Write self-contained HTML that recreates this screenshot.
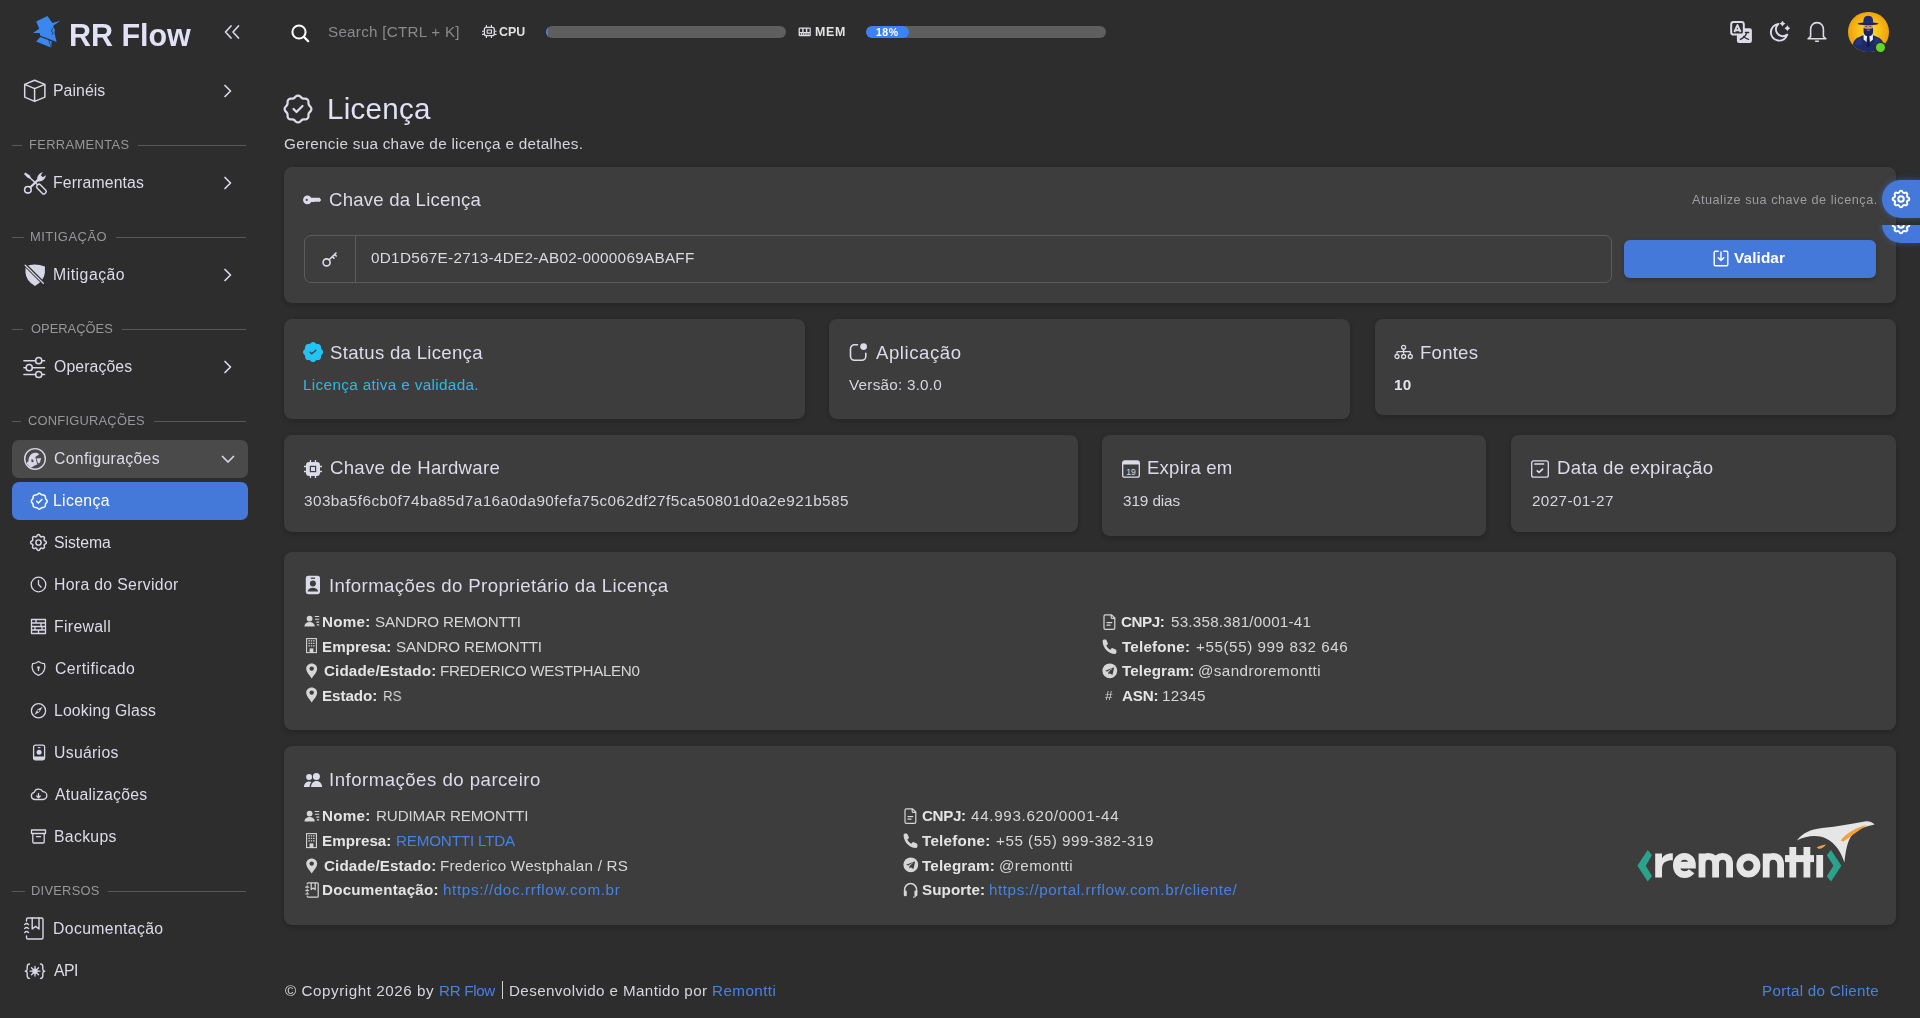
<!DOCTYPE html>
<html lang="pt-BR">
<head>
<meta charset="utf-8">
<title>Licença - RR Flow</title>
<style>
*{box-sizing:border-box;margin:0;padding:0}
html,body{width:1920px;height:1018px;overflow:hidden;background:#2d2d2d;font-family:"Liberation Sans",sans-serif;color:#e1e0f0}
.abs{position:absolute}
svg{display:block;overflow:visible}
.mi{position:absolute;left:12px;width:236px;height:38px;border-radius:7px}
.hl{position:absolute;height:1px;background:#58585a}
.card{position:absolute;background:#3d3d3d;border-radius:8px;box-shadow:0 2px 5px rgba(10,10,20,.22)}
</style>
</head>
<body>
<svg class="abs" style="left:30px;top:14px;" width="32" height="36" viewBox="0 0 32 36"><path fill="#3b87f2" d="M17.44 2.00 L22.39 8.90 L30.40 6.80 L23.42 11.50 L23.30 13.30 L24.90 15.40 L24.50 18.30 L24.90 20.70 L26.60 27.90 L19.10 24.90 L10.40 21.80 L9.60 19.10 L3.00 19.00 L9.20 14.80 L6.20 7.60Z"/><path fill="#3b87f2" d="M10.30 23.00 L18.40 26.00 L20.80 33.60 L6.20 27.40Z"/><path fill="#3b87f2" d="M19.50 26.50 L21.60 27.30 L21.20 33.80Z"/><path d="M22.5 14.399999999999999 L21.5 17.2 L23.200000000000003 19.0 L22.200000000000003 20.799999999999997" fill="none" stroke="#2d2d2d" stroke-width=".8"/></svg>
<div class="abs tx0" style="left:69.00px;top:19.98px;font-size:30.5px;line-height:1;font-weight:700;color:#e3e1f6;letter-spacing:-0.044px;white-space:pre;will-change:transform;">RR Flow</div>
<svg class="abs" style="left:223px;top:24px;" width="18" height="16" viewBox="0 0 18 16"><path fill="none" stroke="#d8d7e6" stroke-width="1.7" stroke-linecap="round" stroke-linejoin="round" d="M8 2 L2.5 8 L8 14 M15.5 2 L10 8 L15.5 14"/></svg>
<svg class="abs" style="left:23px;top:79px;" width="24" height="24" viewBox="0 0 24 24"><path fill="none" stroke="#d8d7e6" stroke-width="1.5" stroke-linecap="round" stroke-linejoin="round" d="M11.6 1.3 L21.9 5.4 L21.9 18.1 L11.6 22.4 L1.7 18.1 L1.7 5.4 Z M1.7 5.4 L11.6 9.6 L21.9 5.4 M11.6 9.6 L11.6 22.4"/></svg>
<div class="abs tx1" style="left:53.34px;top:82.88px;font-size:15.8px;line-height:1;font-weight:400;color:#dcdbe8;letter-spacing:0.075px;white-space:pre;will-change:transform;">Painéis</div>
<svg class="abs" style="left:223px;top:84.0px;" width="10" height="14" viewBox="0 0 10 14"><path fill="none" stroke="#d8d7e6" stroke-width="1.7" stroke-linecap="round" stroke-linejoin="round" d="M2 1.5 L7.5 7 L2 12.5"/></svg>
<div class="hl" style="left:12px;top:145.0px;width:10.0px"></div>
<div class="abs tx2" style="left:29.00px;top:139.08px;font-size:12.9px;line-height:1;font-weight:400;color:#97979b;letter-spacing:0.364px;white-space:pre;will-change:transform;">FERRAMENTAS</div>
<div class="hl" style="left:137.7px;top:145.0px;width:108.3px"></div>
<svg class="abs" style="left:24px;top:172px;" width="22" height="22" viewBox="0 0 22 22"><path fill="#d8d7e6" d="M0 1.9 L1.3 0.4 L5.9 3.5 L6.7 5.5 L5.6 6.5 L3.6 5.8 Z"/><path fill="none" stroke="#d8d7e6" stroke-width="1.4" stroke-linecap="round" stroke-linejoin="round" d="M5.6 5.6 L13.2 12.6"/><rect x="-5.6" y="-2.3" width="11.2" height="4.6" rx="1.8" transform="translate(17.4 17.1) rotate(45)" fill="none" stroke="#d8d7e6" stroke-width="1.5" stroke-linecap="round" stroke-linejoin="round"/><path fill="none" stroke="#d8d7e6" stroke-width="2.2" stroke-linecap="round" stroke-linejoin="round" d="M6.4 15.3 L14.6 7.4"/><circle cx="3.9" cy="17.8" r="3.3" fill="none" stroke="#d8d7e6" stroke-width="1.6" stroke-linecap="round" stroke-linejoin="round"/><path fill="#d8d7e6" d="M13.4 8.6 C12.5 5.2 14.4 1.2 18.8 0.3 L16.8 3.2 L18.8 5.2 L21.9 3.3 C21.5 7.4 17.8 9.8 14.6 9.4 Z"/></svg>
<div class="abs tx3" style="left:53.34px;top:174.88px;font-size:15.8px;line-height:1;font-weight:400;color:#dcdbe8;letter-spacing:0.135px;white-space:pre;will-change:transform;">Ferramentas</div>
<svg class="abs" style="left:223px;top:176.0px;" width="10" height="14" viewBox="0 0 10 14"><path fill="none" stroke="#d8d7e6" stroke-width="1.7" stroke-linecap="round" stroke-linejoin="round" d="M2 1.5 L7.5 7 L2 12.5"/></svg>
<div class="hl" style="left:12px;top:237.0px;width:11.7px"></div>
<div class="abs tx4" style="left:30.49px;top:231.08px;font-size:12.9px;line-height:1;font-weight:400;color:#97979b;letter-spacing:0.525px;white-space:pre;will-change:transform;">MITIGAÇÃO</div>
<div class="hl" style="left:116.0px;top:237.0px;width:130.0px"></div>
<svg class="abs" style="left:24px;top:263px;" width="22" height="24" viewBox="0 0 22 24"><path fill="#d8d7e6" d="M1.5 3.2 Q11 -0.6 20.9 3.6 L20.9 9.5 Q20.2 17.8 11 23 Q1.8 17.8 1.5 9.5 Z"/><path stroke="#2d2d2d" stroke-width="3.4" stroke-linecap="butt" d="M0 0.8 L21.5 22.3"/><path stroke="#d8d7e6" stroke-width="1.3" stroke-linecap="round" d="M1.2 2.3 L19.3 20.3"/></svg>
<div class="abs tx5" style="left:53.34px;top:266.88px;font-size:15.8px;line-height:1;font-weight:400;color:#dcdbe8;letter-spacing:0.506px;white-space:pre;will-change:transform;">Mitigação</div>
<svg class="abs" style="left:223px;top:268.0px;" width="10" height="14" viewBox="0 0 10 14"><path fill="none" stroke="#d8d7e6" stroke-width="1.7" stroke-linecap="round" stroke-linejoin="round" d="M2 1.5 L7.5 7 L2 12.5"/></svg>
<div class="hl" style="left:12px;top:329.0px;width:11.0px"></div>
<div class="abs tx6" style="left:31.00px;top:323.08px;font-size:12.9px;line-height:1;font-weight:400;color:#97979b;letter-spacing:0.011px;white-space:pre;will-change:transform;">OPERAÇÕES</div>
<div class="hl" style="left:121.5px;top:329.0px;width:124.5px"></div>
<svg class="abs" style="left:23px;top:350px;" width="23" height="30" viewBox="0 0 23 30"><path fill="none" stroke="#d8d7e6" stroke-width="1.5" stroke-linecap="round" stroke-linejoin="round" d="M0.9 10.7 H12.6 M18.9 10.7 H21.6 M0.9 17.7 H3.1 M9.4 17.7 H21.6 M0.9 24.5 H12.6 M18.9 24.5 H21.6"/><circle cx="15.7" cy="10.7" r="3.1" fill="none" stroke="#d8d7e6" stroke-width="1.5" stroke-linecap="round" stroke-linejoin="round"/><circle cx="6.2" cy="17.7" r="3.1" fill="none" stroke="#d8d7e6" stroke-width="1.5" stroke-linecap="round" stroke-linejoin="round"/><circle cx="15.7" cy="24.5" r="3.1" fill="none" stroke="#d8d7e6" stroke-width="1.5" stroke-linecap="round" stroke-linejoin="round"/></svg>
<div class="abs tx7" style="left:54.34px;top:358.88px;font-size:15.8px;line-height:1;font-weight:400;color:#dcdbe8;letter-spacing:0.100px;white-space:pre;will-change:transform;">Operações</div>
<svg class="abs" style="left:223px;top:360.0px;" width="10" height="14" viewBox="0 0 10 14"><path fill="none" stroke="#d8d7e6" stroke-width="1.7" stroke-linecap="round" stroke-linejoin="round" d="M2 1.5 L7.5 7 L2 12.5"/></svg>
<div class="hl" style="left:12px;top:421.0px;width:8.6px"></div>
<div class="abs tx8" style="left:28.32px;top:415.08px;font-size:12.9px;line-height:1;font-weight:400;color:#97979b;letter-spacing:0.225px;white-space:pre;will-change:transform;">CONFIGURAÇÕES</div>
<div class="hl" style="left:154.0px;top:421.0px;width:92.0px"></div>
<div class="mi" style="top:440px;background:#4a4a4a"></div>
<svg class="abs" style="left:24px;top:448px;" width="22" height="22" viewBox="0 0 22 22"><circle cx="11" cy="10.9" r="10.3" fill="none" stroke="#d8d7e6" stroke-width="1.4" stroke-linecap="round" stroke-linejoin="round"/><path fill="#d8d7e6" d="M5.4 8.8 C6.2 6.2 8.2 4.9 11.7 4.7 C13.1 4.6 14.3 5.3 15.3 6.3 L11.3 9 L13.3 16.6 L11 17.2 L7.1 19.8 C5 18.6 3.4 16.8 2.4 15 L4.5 13.2 C4.4 11.6 4.8 10 5.4 8.8 Z"/><path fill="#4a4a4a" d="M7.2 11.6 L9.2 11.4 L9.6 14 L7.6 14.2 Z"/><path fill="#d8d7e6" d="M12.4 10.4 L17.1 9.9 L16 14.6 L14.2 15.4 Z"/></svg>
<div class="abs tx9" style="left:54.34px;top:451.38px;font-size:15.8px;line-height:1;font-weight:400;color:#dcdbe8;letter-spacing:0.310px;white-space:pre;will-change:transform;">Configurações</div>
<svg class="abs" style="left:221px;top:454.5px;" width="14" height="10" viewBox="0 0 14 10"><path fill="none" stroke="#d8d7e6" stroke-width="1.7" stroke-linecap="round" stroke-linejoin="round" d="M1.5 1.5 L7 7 L12.5 1.5"/></svg>
<div class="mi" style="top:482px;background:#4479da"></div>
<svg class="abs" style="left:30.5px;top:492.5px" width="16.5" height="16.5" viewBox="2.6 2.6 18.8 18.8"><path fill="none" stroke="#ffffff" stroke-width="1.7" stroke-linecap="round" stroke-linejoin="round" d="M5 7.2a2.2 2.2 0 0 1 2.2 -2.2h1a2.2 2.2 0 0 0 1.55 -.64l.7 -.7a2.2 2.2 0 0 1 3.12 0l.7 .7c.412 .41 .97 .64 1.55 .64h1a2.2 2.2 0 0 1 2.2 2.2v1c0 .58 .23 1.138 .64 1.55l.7 .7a2.2 2.2 0 0 1 0 3.12l-.7 .7a2.2 2.2 0 0 0 -.64 1.55v1a2.2 2.2 0 0 1 -2.2 2.2h-1a2.2 2.2 0 0 0 -1.55 .64l-.7 .7a2.2 2.2 0 0 1 -3.12 0l-.7 -.7a2.2 2.2 0 0 0 -1.55 -.64h-1a2.2 2.2 0 0 1 -2.2 -2.2v-1a2.2 2.2 0 0 0 -.64 -1.55l-.7 -.7a2.2 2.2 0 0 1 0 -3.12l.7 -.7a2.2 2.2 0 0 0 .64 -1.55v-1M9 12l2 2l4 -4"/></svg>
<div class="abs tx10" style="left:53.34px;top:493.03px;font-size:15.8px;line-height:1;font-weight:400;color:#ffffff;letter-spacing:0.333px;white-space:pre;will-change:transform;">Licença</div>
<svg class="abs" style="left:30px;top:534.0px" width="17" height="17" viewBox="2.3 2.3 19.4 19.4"><path fill="none" stroke="#d8d7e6" stroke-width="1.7" stroke-linecap="round" stroke-linejoin="round" d="M10.325 4.317c.426 -1.756 2.924 -1.756 3.35 0a1.724 1.724 0 0 0 2.573 1.066c1.543 -.94 3.31 .826 2.37 2.37a1.724 1.724 0 0 0 1.065 2.572c1.756 .426 1.756 2.924 0 3.35a1.724 1.724 0 0 0 -1.066 2.573c.94 1.543 -.826 3.31 -2.37 2.37a1.724 1.724 0 0 0 -2.572 1.065c-.426 1.756 -2.924 1.756 -3.35 0a1.724 1.724 0 0 0 -2.573 -1.066c-1.543 .94 -3.31 -.826 -2.37 -2.37a1.724 1.724 0 0 0 -1.065 -2.572c-1.756 -.426 -1.756 -2.924 0 -3.35a1.724 1.724 0 0 0 1.066 -2.573c-.94 -1.543 .826 -3.31 2.37 -2.37c1 .608 2.296 .07 2.572 -1.065zM9 12a3 3 0 1 0 6 0a3 3 0 0 0 -6 0"/></svg>
<div class="abs tx11" style="left:53.98px;top:535.03px;font-size:15.8px;line-height:1;font-weight:400;color:#dcdbe8;letter-spacing:-0.043px;white-space:pre;will-change:transform;">Sistema</div>
<svg class="abs" style="left:30px;top:576.0px;" width="17" height="17" viewBox="0 0 17 17"><circle cx="8.5" cy="8.5" r="7.3" fill="none" stroke="#d8d7e6" stroke-width="1.3" stroke-linecap="round" stroke-linejoin="round"/><path fill="none" stroke="#d8d7e6" stroke-width="1.3" stroke-linecap="round" stroke-linejoin="round" d="M8.5 4.5 V8.5 L11 11"/></svg>
<div class="abs tx12" style="left:53.68px;top:577.03px;font-size:15.8px;line-height:1;font-weight:400;color:#dcdbe8;letter-spacing:0.323px;white-space:pre;will-change:transform;">Hora do Servidor</div>
<svg class="abs" style="left:30px;top:618.0px;" width="17" height="17" viewBox="0 0 17 17"><path fill="none" stroke="#d8d7e6" stroke-width="1.3" stroke-linecap="round" stroke-linejoin="round" d="M1.5 1.5 H15.5 V15.5 H1.5 Z M1.5 5 H15.5 M1.5 8.5 H15.5 M1.5 12 H15.5 M6 1.5 V5 M11 5 V8.5 M5 8.5 V12 M12 8.5 V12 M8.5 12 V15.5"/></svg>
<div class="abs tx13" style="left:53.68px;top:619.03px;font-size:15.8px;line-height:1;font-weight:400;color:#dcdbe8;letter-spacing:0.323px;white-space:pre;will-change:transform;">Firewall</div>
<svg class="abs" style="left:30px;top:660.0px;" width="17" height="17" viewBox="0 0 17 17"><path fill="none" stroke="#d8d7e6" stroke-width="1.3" stroke-linecap="round" stroke-linejoin="round" d="M8.5 1.6 A9 9 0 0 0 14.4 3.6 A9 9 0 0 1 8.5 15.4 A9 9 0 0 1 2.6 3.6 A9 9 0 0 0 8.5 1.6"/><circle cx="8.5" cy="7.6" r="1.3" fill="#d8d7e6"/><path fill="none" stroke="#d8d7e6" stroke-width="1.3" stroke-linecap="round" stroke-linejoin="round" d="M8.5 8 V10.5"/></svg>
<div class="abs tx14" style="left:54.68px;top:661.03px;font-size:15.8px;line-height:1;font-weight:400;color:#dcdbe8;letter-spacing:0.430px;white-space:pre;will-change:transform;">Certificado</div>
<svg class="abs" style="left:30px;top:702.0px;" width="17" height="17" viewBox="0 0 17 17"><circle cx="8.5" cy="8.8" r="7.1" fill="none" stroke="#d8d7e6" stroke-width="1.3" stroke-linecap="round" stroke-linejoin="round"/><path fill="#d8d7e6" d="M12.5 4.8 L9.6 10 L4.5 12.8 L7.4 7.6 Z"/><path fill="#2d2d2d" d="M8.5 7.8 a1 1 0 1 0 0.01 0"/></svg>
<div class="abs tx15" style="left:53.68px;top:703.03px;font-size:15.8px;line-height:1;font-weight:400;color:#dcdbe8;letter-spacing:0.150px;white-space:pre;will-change:transform;">Looking Glass</div>
<svg class="abs" style="left:30px;top:744.0px;" width="17" height="17" viewBox="0 0 17 17"><rect x="3.6" y="1.2" width="11" height="14.6" rx="1.8" fill="none" stroke="#d8d7e6" stroke-width="1.3" stroke-linecap="round" stroke-linejoin="round"/><circle cx="9.1" cy="8.3" r="2.5" fill="#d8d7e6"/><path fill="#d8d7e6" d="M3.6 12.4 H14.6 V14 A1.8 1.8 0 0 1 12.8 15.8 H5.4 A1.8 1.8 0 0 1 3.6 14 Z"/><path stroke="#d8d7e6" stroke-width="1.1" d="M7.8 3.6 H10.4"/></svg>
<div class="abs tx16" style="left:53.68px;top:745.03px;font-size:15.8px;line-height:1;font-weight:400;color:#dcdbe8;letter-spacing:0.297px;white-space:pre;will-change:transform;">Usuários</div>
<svg class="abs" style="left:30px;top:786.0px;" width="17" height="17" viewBox="0 0 17 17"><path fill="none" stroke="#d8d7e6" stroke-width="1.3" stroke-linecap="round" stroke-linejoin="round" d="M4.6 13.5 A3.6 3.6 0 0 1 4.2 6.4 A4.6 4.3 0 0 1 12.8 5.6 A3.5 3.5 0 0 1 13 13.5 Z"/><path fill="none" stroke="#d8d7e6" stroke-width="1.3" stroke-linecap="round" stroke-linejoin="round" d="M8.5 7.5 V11.5 M6.8 10 L8.5 11.7 L10.2 10"/></svg>
<div class="abs tx17" style="left:54.68px;top:787.03px;font-size:15.8px;line-height:1;font-weight:400;color:#dcdbe8;letter-spacing:0.229px;white-space:pre;will-change:transform;">Atualizações</div>
<svg class="abs" style="left:30px;top:828.0px;" width="17" height="17" viewBox="0 0 17 17"><path fill="none" stroke="#d8d7e6" stroke-width="1.3" stroke-linecap="round" stroke-linejoin="round" d="M1.5 2 H15.5 V5.5 H1.5 Z M2.8 5.5 V14 A1 1 0 0 0 3.8 15 H13.2 A1 1 0 0 0 14.2 14 V5.5 M6.5 8.7 H10.5"/></svg>
<div class="abs tx18" style="left:53.68px;top:829.03px;font-size:15.8px;line-height:1;font-weight:400;color:#dcdbe8;letter-spacing:0.303px;white-space:pre;will-change:transform;">Backups</div>
<div class="hl" style="left:12px;top:891.2px;width:12.5px"></div>
<div class="abs tx19" style="left:31.15px;top:885.28px;font-size:12.9px;line-height:1;font-weight:400;color:#97979b;letter-spacing:0.259px;white-space:pre;will-change:transform;">DIVERSOS</div>
<div class="hl" style="left:108.4px;top:891.2px;width:137.6px"></div>
<svg class="abs" style="left:23px;top:917px;" width="23" height="24" viewBox="0 0 23 24"><path fill="none" stroke="#d8d7e6" stroke-width="1.4" stroke-linecap="round" stroke-linejoin="round" d="M3.5 4 V2.5 A1.5 1.5 0 0 1 5 1 H18.5 A1.5 1.5 0 0 1 20 2.5 V20.5 A1.5 1.5 0 0 1 18.5 22 H5 A1.5 1.5 0 0 1 3.5 20.5 V19"/><path fill="none" stroke="#d8d7e6" stroke-width="1.3" stroke-linecap="round" stroke-linejoin="round" d="M1.6 7.6 Q3.6 5.4 5.6 7.6 M1.6 11.6 Q3.6 9.4 5.6 11.6 M1.6 15.6 Q3.6 13.4 5.6 15.6"/><path fill="none" stroke="#d8d7e6" stroke-width="1.4" stroke-linecap="round" stroke-linejoin="round" d="M9.2 1 V12 L12.6 9.4 L16 12 V1"/></svg>
<div class="abs tx20" style="left:53.34px;top:920.88px;font-size:15.8px;line-height:1;font-weight:400;color:#dcdbe8;letter-spacing:0.354px;white-space:pre;will-change:transform;">Documentação</div>
<svg class="abs" style="left:24px;top:962.5px;" width="22" height="17" viewBox="0 0 22 17"><path fill="none" stroke="#d8d7e6" stroke-width="1.4" stroke-linecap="round" stroke-linejoin="round" d="M5.5 1 C3.5 1 3.2 2 3.2 4 V6.3 C3.2 7.3 2.5 8.1 1.3 8.2 C2.5 8.3 3.2 9.1 3.2 10.1 V12.4 C3.2 14.4 3.5 15.4 5.5 15.4"/><path fill="none" stroke="#d8d7e6" stroke-width="1.4" stroke-linecap="round" stroke-linejoin="round" d="M16.5 1 C18.5 1 18.8 2 18.8 4 V6.3 C18.8 7.3 19.5 8.1 20.7 8.2 C19.5 8.3 18.8 9.1 18.8 10.1 V12.4 C18.8 14.4 18.5 15.4 16.5 15.4"/><path fill="none" stroke="#d8d7e6" stroke-width="1.3" stroke-linecap="round" stroke-linejoin="round" d="M11 3.3 V13.1 M6.1 8.2 H15.9 M7.5 4.7 L14.5 11.7 M14.5 4.7 L7.5 11.7"/><circle cx="11" cy="8.2" r="2.6" fill="#d8d7e6"/></svg>
<div class="abs tx21" style="left:54.34px;top:962.88px;font-size:15.8px;line-height:1;font-weight:400;color:#dcdbe8;letter-spacing:-0.546px;white-space:pre;will-change:transform;">API</div>
<svg class="abs" style="left:289.5px;top:22.5px;" width="21" height="21" viewBox="0 0 21 21"><circle cx="9" cy="9" r="6.6" fill="none" stroke="#fff" stroke-width="2"/><path d="M13.9 13.9 L18.2 18.2" stroke="#fff" stroke-width="2.2" stroke-linecap="round"/></svg>
<div class="abs tx22" style="left:327.62px;top:23.93px;font-size:15.2px;line-height:1;font-weight:400;color:#8a8a8e;letter-spacing:0.265px;white-space:pre;will-change:transform;">Search [CTRL + K]</div>
<svg class="abs" style="left:481px;top:24px;" width="15" height="15" viewBox="0 0 15 15"><rect x="3.4" y="3.3" width="9.9" height="8.4" rx="2" fill="none" stroke="#dedee2" stroke-width="1.3" stroke-linecap="round" stroke-linejoin="round"/><rect x="6.2" y="6" width="4.3" height="3.2" fill="none" stroke="#dedee2" stroke-width="1.1"/><path stroke="#dedee2" stroke-width="1.1" d="M5.4 1 V3.3 M10.4 1 V3.3 M5.4 11.7 V14 M10.4 11.7 V14 M1 7.2 H3.4 M1 10.4 H3.4 M13.3 7.2 H15.6 M13.3 10.4 H15.6"/></svg>
<div class="abs tx23" style="left:499.32px;top:25.60px;font-size:12.4px;line-height:1;font-weight:700;color:#e2e2e4;letter-spacing:-0.011px;white-space:pre;will-change:transform;">CPU</div>
<div class="abs" style="left:546px;top:26px;width:240px;height:12px;border-radius:6px;background:#5f5f5f;overflow:hidden"><div style="width:2px;height:12px;background:#3b82f6"></div></div>
<svg class="abs" style="left:797px;top:26px;" width="15" height="12" viewBox="0 0 15 12"><rect x="1.6" y="1.5" width="12.2" height="8.8" rx="1.3" fill="#dedee2"/><path fill="#2d2d2d" d="M2.9 2.7 H5.2 V6 H2.9 Z M6.6 2.7 H8.9 V6 H6.6 Z M10.3 2.7 H12.6 V6 H10.3 Z M3 7.3 H4 V8.7 H3 Z M5.2 7.3 H6.2 V8.7 H5.2 Z M7.4 7.3 H8.4 V8.7 H7.4 Z M9.6 7.3 H10.6 V8.7 H9.6 Z M11.6 7.3 H12.6 V8.7 H11.6 Z"/></svg>
<div class="abs tx24" style="left:815.32px;top:25.50px;font-size:12.4px;line-height:1;font-weight:700;color:#e2e2e4;letter-spacing:0.707px;white-space:pre;will-change:transform;">MEM</div>
<div class="abs" style="left:866px;top:26px;width:240px;height:12px;border-radius:6px;background:#5f5f5f;overflow:hidden"><div style="width:43px;height:12px;background:#3b82f6;border-radius:6px"></div></div>
<div class="abs tx25" style="left:876.00px;top:27.31px;font-size:10.5px;line-height:1;font-weight:700;color:#ffffff;letter-spacing:0.510px;white-space:pre;will-change:transform;">18%</div>
<svg class="abs" style="left:1729px;top:20px;" width="24" height="24" viewBox="0 0 24 24"><rect x="7.9" y="8.2" width="15" height="14.7" rx="2.2" fill="#dcdbea"/><rect x="2.2" y="2.1" width="12.6" height="12.5" rx="2.4" fill="#2d2d2d" stroke="#dcdbea" stroke-width="2"/><path fill="none" stroke="#dcdbea" stroke-width="1.9" stroke-linejoin="round" d="M5.3 12 L8.45 5.1 L11.6 12 M6.4 10.2 H10.5"/><path fill="none" stroke="#2d2d2d" stroke-width="1.3" stroke-linecap="round" d="M16.4 12.5 H19.7 M17.6 13.3 Q16.2 17.2 11.4 19.4 M14.6 16.4 Q16.6 18.6 19.6 19.4"/></svg>
<svg class="abs" style="left:1768px;top:20px;" width="24" height="24" viewBox="0 0 24 24"><path fill="none" stroke="#dcdbea" stroke-width="1.9" stroke-linecap="round" stroke-linejoin="round" d="M10.4 3.9 A8.4 8.4 0 1 0 19.3 14.6 A6.6 6.6 0 0 1 10.4 3.9 Z"/><path fill="#dcdbea" d="M14.5 0.7000000000000002 Q15.312 2.7880000000000003 17.4 3.6 Q15.312 4.412 14.5 6.5 Q13.688 4.412 11.6 3.6 Q13.688 2.7880000000000003 14.5 0.7000000000000002 Z M19.4 5.299999999999999 Q20.212 7.387999999999999 22.299999999999997 8.2 Q20.212 9.011999999999999 19.4 11.1 Q18.587999999999997 9.011999999999999 16.5 8.2 Q18.587999999999997 7.387999999999999 19.4 5.299999999999999 Z"/></svg>
<svg class="abs" style="left:1806px;top:20px;" width="22" height="24" viewBox="0 0 22 24"><path fill="none" stroke="#dcdbea" stroke-width="1.6" stroke-linecap="round" stroke-linejoin="round" d="M11 2.6 C6.8 2.6 4.6 5.8 4.6 9.6 V16.6 L2.1 18.8 H19.9 L17.4 16.6 V9.6 C17.4 5.8 15.2 2.6 11 2.6 Z"/><path fill="none" stroke="#dcdbea" stroke-width="1.6" stroke-linecap="round" stroke-linejoin="round" d="M9.6 21.2 H12.4"/></svg>
<div class="abs" style="left:1848px;top:11.5px;width:40.5px;height:40.5px;border-radius:50%;overflow:hidden;background:radial-gradient(circle at 50% 48%,#ffe03a 0%,#fbc21a 35%,#eea10c 70%,#c97a06 100%)">
  <svg width="40.5" height="40.5" viewBox="0 0 40 40">
  <path fill="#1d2a6a" d="M3.5 41 C4 32 5.5 27 10.5 25 L15.6 22.6 L20 27.5 L24.4 22.6 L29.5 25 C34.5 27 36 32 36.5 41 Z"/>
  <path fill="#2c3b86" d="M6.5 33 C7.5 29 9 26.6 12.5 25.4 L14.5 32 Z M33.5 33 C32.5 29 31 26.6 27.5 25.4 L25.5 32 Z" opacity=".7"/>
  <path fill="#eef0f6" d="M15.4 21.6 H24.6 V27.2 L20 31 L15.4 27.2 Z"/>
  <path fill="#141c4a" d="M18.9 23.6 H21.1 L22 33 L20 35 L18 33 Z"/>
  <path fill="#d09a74" d="M15.6 12 H24.6 V17.5 C24.6 20 22.8 21.6 20.1 21.6 C17.4 21.6 15.6 20 15.6 17.5 Z"/>
  <path fill="#1b2560" d="M15.4 15.6 C16.6 16.8 18.2 16.5 20.1 16.5 C22 16.5 23.6 16.8 24.8 15.6 V19.5 C24.8 22.6 22.8 24 20.1 24 C17.4 24 15.4 22.6 15.4 19.5 Z"/>
  <path fill="#d09a74" d="M18.4 17.6 H21.8 V18.3 H18.4 Z"/>
  <path fill="#3a2a20" d="M17.2 13.8 H19 V14.5 H17.2 Z M21.2 13.8 H23 V14.5 H21.2 Z"/>
  <ellipse cx="19.8" cy="11.6" rx="10.4" ry="1.4" fill="#19235a"/>
  <path fill="#1e2b6c" d="M15.2 11.6 C15 6.5 15.8 3.6 20 3.6 C24.2 3.6 25 6.5 24.8 11.6 Z"/>
  <path fill="#2b3a7e" d="M15.4 9.4 H24.6 V10.4 H15.4 Z" opacity=".6"/>
  </svg>
</div>
<div class="abs" style="left:1876.3px;top:43.4px;width:9px;height:9px;border-radius:50%;background:#62d62c;box-shadow:0 0 0 1.6px #2d2d2d"></div>
<svg class="abs" style="left:284px;top:94.5px" width="28" height="28" viewBox="2.6 2.6 18.8 18.8"><path fill="none" stroke="#dcdbea" stroke-width="1.5" stroke-linecap="round" stroke-linejoin="round" d="M5 7.2a2.2 2.2 0 0 1 2.2 -2.2h1a2.2 2.2 0 0 0 1.55 -.64l.7 -.7a2.2 2.2 0 0 1 3.12 0l.7 .7c.412 .41 .97 .64 1.55 .64h1a2.2 2.2 0 0 1 2.2 2.2v1c0 .58 .23 1.138 .64 1.55l.7 .7a2.2 2.2 0 0 1 0 3.12l-.7 .7a2.2 2.2 0 0 0 -.64 1.55v1a2.2 2.2 0 0 1 -2.2 2.2h-1a2.2 2.2 0 0 0 -1.55 .64l-.7 .7a2.2 2.2 0 0 1 -3.12 0l-.7 -.7a2.2 2.2 0 0 0 -1.55 -.64h-1a2.2 2.2 0 0 1 -2.2 -2.2v-1a2.2 2.2 0 0 0 -.64 -1.55l-.7 -.7a2.2 2.2 0 0 1 0 -3.12l.7 -.7a2.2 2.2 0 0 0 .64 -1.55v-1M9 12l2 2l4 -4"/></svg>
<div class="abs tx26" style="left:327.34px;top:94.23px;font-size:29.5px;line-height:1;font-weight:400;color:#e1e0f5;letter-spacing:0.291px;white-space:pre;will-change:transform;">Licença</div>
<div class="abs tx27" style="left:284.34px;top:136.05px;font-size:15.3px;line-height:1;font-weight:400;color:#d4d4da;letter-spacing:0.266px;white-space:pre;will-change:transform;">Gerencie sua chave de licença e detalhes.</div>
<div class="card" style="left:284px;top:167px;width:1612px;height:136px"></div>
<svg class="abs" style="left:303px;top:194px;" width="20" height="12" viewBox="0 0 20 12"><circle cx="4.4" cy="5.9" r="4.3" fill="#dcdbea"/><circle cx="3.7" cy="5.9" r="1.05" fill="#3d3d3d"/><path fill="#dcdbea" d="M7.5 3.7 H16.6 L18.2 5.9 L16.6 8.1 L15.6 7.4 L14.8 8.1 L13.9 7.4 L13.1 8.1 L12.2 7.4 L11.4 8.1 H7.5 Z"/></svg>
<div class="abs tx28" style="left:329.45px;top:191.46px;font-size:18.6px;line-height:1;font-weight:400;color:#dcdbea;letter-spacing:0.203px;white-space:pre;will-change:transform;">Chave da Licença</div>
<div class="abs tx29" style="left:1691.51px;top:194.25px;font-size:12.7px;line-height:1;font-weight:400;color:#9c9ca2;letter-spacing:0.501px;white-space:pre;will-change:transform;">Atualize sua chave de licença.</div>
<div class="abs" style="left:304px;top:235px;width:1308px;height:48px;border:1px solid #5c5c60;border-radius:7px"></div>
<div class="abs" style="left:355px;top:236px;width:1px;height:46px;background:#5c5c60"></div>
<svg class="abs" style="left:321px;top:251px;" width="17" height="17" viewBox="0 0 17 17"><circle cx="5.6" cy="11.4" r="3.5" fill="none" stroke="#dcdbea" stroke-width="1.6" stroke-linecap="round" stroke-linejoin="round"/><path fill="none" stroke="#dcdbea" stroke-width="1.6" stroke-linecap="round" stroke-linejoin="round" d="M8.2 8.8 L15 2 M11.4 5.6 L13 7.2 M13.6 3.4 L15.2 5"/></svg>
<div class="abs tx30" style="left:371.00px;top:249.85px;font-size:15.3px;line-height:1;font-weight:400;color:#dadae0;letter-spacing:0.273px;white-space:pre;will-change:transform;">0D1D567E-2713-4DE2-AB02-0000069ABAFF</div>
<div class="abs" style="left:1624px;top:240px;width:252px;height:38px;border-radius:6px;background:#4479da;box-shadow:0 2px 4px rgba(0,0,0,.2)"></div>
<svg class="abs" style="left:1713px;top:250px;" width="16" height="17" viewBox="0 0 16 17"><path fill="none" stroke="#fff" stroke-width="1.4" stroke-linecap="round" stroke-linejoin="round" d="M5.2 1.3 H2.4 A1.2 1.2 0 0 0 1.2 2.5 V14.5 A1.2 1.2 0 0 0 2.4 15.7 H13.6 A1.2 1.2 0 0 0 14.8 14.5 V2.5 A1.2 1.2 0 0 0 13.6 1.3 H10.8 M8 2 V10.5 M5.2 7.8 L8 10.6 L10.8 7.8"/></svg>
<div class="abs tx31" style="left:1734.00px;top:250.05px;font-size:15.3px;line-height:1;font-weight:700;color:#ffffff;letter-spacing:0.130px;white-space:pre;will-change:transform;">Validar</div>
<div class="card" style="left:284px;top:319px;width:521px;height:100px"></div>
<svg class="abs" style="left:303.9px;top:342.8px" width="18.1" height="18.1" viewBox="3.3 3.3 17.4 17.4"><path fill="#24c3f5" stroke="#24c3f5" stroke-width="1.3" stroke-linejoin="round" d="M5 7.2a2.2 2.2 0 0 1 2.2 -2.2h1a2.2 2.2 0 0 0 1.55 -.64l.7 -.7a2.2 2.2 0 0 1 3.12 0l.7 .7c.412 .41 .97 .64 1.55 .64h1a2.2 2.2 0 0 1 2.2 2.2v1c0 .58 .23 1.138 .64 1.55l.7 .7a2.2 2.2 0 0 1 0 3.12l-.7 .7a2.2 2.2 0 0 0 -.64 1.55v1a2.2 2.2 0 0 1 -2.2 2.2h-1a2.2 2.2 0 0 0 -1.55 .64l-.7 .7a2.2 2.2 0 0 1 -3.12 0l-.7 -.7a2.2 2.2 0 0 0 -1.55 -.64h-1a2.2 2.2 0 0 1 -2.2 -2.2v-1a2.2 2.2 0 0 0 -.64 -1.55l-.7 -.7a2.2 2.2 0 0 1 0 -3.12l.7 -.7a2.2 2.2 0 0 0 .64 -1.55v-1z"/><path d="M9.2 12.2 L10.8 13.7 L14.7 10.3" fill="none" stroke="#3d3d3d" stroke-width="1.25" stroke-linecap="round" stroke-linejoin="round"/></svg>
<div class="abs tx32" style="left:329.64px;top:343.76px;font-size:18.6px;line-height:1;font-weight:400;color:#dcdbea;letter-spacing:0.296px;white-space:pre;will-change:transform;">Status da Licença</div>
<div class="abs tx33" style="left:303.00px;top:376.95px;font-size:15.3px;line-height:1;font-weight:400;color:#2db8ea;letter-spacing:0.335px;white-space:pre;will-change:transform;">Licença ativa e validada.</div>
<div class="card" style="left:829px;top:319px;width:521px;height:100px"></div>
<svg class="abs" style="left:849px;top:343px;" width="20" height="20" viewBox="0 0 20 20"><path fill="none" stroke="#dcdbea" stroke-width="1.6" stroke-linecap="round" stroke-linejoin="round" d="M8.5 1.8 H5.5 A4 4 0 0 0 1.5 5.8 V13.3 A4 4 0 0 0 5.5 17.3 H12.8 A4 4 0 0 0 16.8 13.3 V10.4"/><circle cx="14.6" cy="3.6" r="3.4" fill="#dcdbea"/></svg>
<div class="abs tx34" style="left:875.68px;top:343.76px;font-size:18.6px;line-height:1;font-weight:400;color:#dcdbea;letter-spacing:0.550px;white-space:pre;will-change:transform;">Aplicação</div>
<div class="abs tx35" style="left:849.34px;top:376.95px;font-size:15.3px;line-height:1;font-weight:400;color:#d6d6dc;letter-spacing:0.223px;white-space:pre;will-change:transform;">Versão: 3.0.0</div>
<div class="card" style="left:1375px;top:319px;width:521px;height:96px"></div>
<svg class="abs" style="left:1394px;top:344px;" width="19" height="16" viewBox="0 0 19 16"><circle cx="9.6" cy="3.3" r="2" fill="none" stroke="#dcdbea" stroke-width="1.3" stroke-linecap="round" stroke-linejoin="round"/><circle cx="3" cy="12.5" r="2" fill="none" stroke="#dcdbea" stroke-width="1.3" stroke-linecap="round" stroke-linejoin="round"/><circle cx="9.6" cy="12.5" r="2" fill="none" stroke="#dcdbea" stroke-width="1.3" stroke-linecap="round" stroke-linejoin="round"/><circle cx="16.3" cy="12.5" r="2" fill="none" stroke="#dcdbea" stroke-width="1.3" stroke-linecap="round" stroke-linejoin="round"/><path fill="none" stroke="#dcdbea" stroke-width="1.4" stroke-linecap="round" stroke-linejoin="round" d="M9.6 5.3 V9 M3 9.2 V8.3 Q3 7.6 3.7 7.6 H15.6 Q16.3 7.6 16.3 8.3 V9.2"/></svg>
<div class="abs tx36" style="left:1420.34px;top:343.76px;font-size:18.6px;line-height:1;font-weight:400;color:#dcdbea;letter-spacing:0.223px;white-space:pre;will-change:transform;">Fontes</div>
<div class="abs tx37" style="left:1394.30px;top:377.05px;font-size:15.3px;line-height:1;font-weight:700;color:#e4e4ea;letter-spacing:0.193px;white-space:pre;will-change:transform;">10</div>
<div class="card" style="left:284px;top:435px;width:794px;height:97px"></div>
<svg class="abs" style="left:303px;top:459px;" width="20" height="20" viewBox="0 0 20 20"><rect x="3" y="3" width="14" height="14" rx="3.2" fill="#dcdbea"/><path stroke="#dcdbea" stroke-width="1.3" d="M1 7.5 H3.5 M1 12.5 H3.5 M16.5 7.5 H19 M16.5 12.5 H19 M7.5 1 V3.5 M12.5 1 V3.5 M7.5 16.5 V19 M12.5 16.5 V19"/><rect x="7.4" y="7.4" width="5.2" height="5.2" fill="none" stroke="#3d3d3d" stroke-width="1.2"/></svg>
<div class="abs tx38" style="left:329.64px;top:459.46px;font-size:18.6px;line-height:1;font-weight:400;color:#dcdbea;letter-spacing:0.272px;white-space:pre;will-change:transform;">Chave de Hardware</div>
<div class="abs tx39" style="left:304.00px;top:493.05px;font-size:15.3px;line-height:1;font-weight:400;color:#d6d6dc;letter-spacing:0.447px;white-space:pre;will-change:transform;">303ba5f6cb0f74ba85d7a16a0da90fefa75c062df27f5ca50801d0a2e921b585</div>
<div class="card" style="left:1102px;top:435px;width:384px;height:101px"></div>
<svg class="abs" style="left:1121px;top:459px;" width="20" height="20" viewBox="0 0 20 20"><rect x="1.7" y="1.9" width="16.6" height="16.3" rx="2" fill="none" stroke="#dcdbea" stroke-width="1.3" stroke-linecap="round" stroke-linejoin="round"/><path fill="#dcdbea" d="M1.7 4 A2 2 0 0 1 3.7 1.9 H16.3 A2 2 0 0 1 18.3 4 V5.4 H1.7 Z"/><text x="10" y="15.6" font-size="8.6" fill="#dcdbea" text-anchor="middle" font-family="Liberation Sans">19</text></svg>
<div class="abs tx40" style="left:1147.49px;top:459.46px;font-size:18.6px;line-height:1;font-weight:400;color:#dcdbea;letter-spacing:0.205px;white-space:pre;will-change:transform;">Expira em</div>
<div class="abs tx41" style="left:1122.68px;top:493.05px;font-size:15.3px;line-height:1;font-weight:400;color:#d6d6dc;letter-spacing:-0.096px;white-space:pre;will-change:transform;">319 dias</div>
<div class="card" style="left:1511px;top:435px;width:385px;height:97px"></div>
<svg class="abs" style="left:1530px;top:459px;" width="20" height="20" viewBox="0 0 20 20"><rect x="1.7" y="1.9" width="16.6" height="16.3" rx="2" fill="none" stroke="#dcdbea" stroke-width="1.3" stroke-linecap="round" stroke-linejoin="round"/><path fill="none" stroke="#dcdbea" stroke-width="1.6" stroke-linecap="round" stroke-linejoin="round" d="M4.8 5 H13.6 M7.2 11.8 L9.1 13.4 L12.6 10.1"/></svg>
<div class="abs tx42" style="left:1556.51px;top:459.46px;font-size:18.6px;line-height:1;font-weight:400;color:#dcdbea;letter-spacing:0.318px;white-space:pre;will-change:transform;">Data de expiração</div>
<div class="abs tx43" style="left:1531.68px;top:493.05px;font-size:15.3px;line-height:1;font-weight:400;color:#d6d6dc;letter-spacing:0.360px;white-space:pre;will-change:transform;">2027-01-27</div>
<div class="card" style="left:284px;top:552px;width:1612px;height:178px"></div>
<svg class="abs" style="left:305px;top:575px;" width="16" height="20" viewBox="0 0 16 20"><rect x="0.8" y="0.8" width="14.2" height="18.4" rx="2.4" fill="#dcdbea"/><path stroke="#3d3d3d" stroke-width="1.3" d="M5.8 3.2 H10"/><circle cx="7.9" cy="8.6" r="3" fill="#3d3d3d"/><path fill="#3d3d3d" d="M2.6 16.6 C3.2 14 5 12.8 7.9 12.8 C10.8 12.8 12.6 14 13.2 16.6 Z"/></svg>
<div class="abs tx44" style="left:329.00px;top:576.66px;font-size:18.6px;line-height:1;font-weight:400;color:#dcdbea;letter-spacing:0.396px;white-space:pre;will-change:transform;">Informações do Proprietário da Licença</div>
<svg class="abs" style="left:304px;top:615.4px;" width="16" height="12" viewBox="0 0 16 12"><circle cx="5.6" cy="3.6" r="2.9" fill="#d6d6d6"/><path fill="#d6d6d6" d="M0.4 11.4 C0.6 8.4 2.6 6.9 5.6 6.9 C8.6 6.9 10.6 8.4 10.8 11.4 Z"/><path stroke="#d6d6d6" stroke-width="1.1" d="M10.8 1.5 H15.2 M11 4.3 H15.2 M12.4 7.1 H15.2 M12.8 9.9 H15.2"/></svg>
<div class="abs tx45" style="left:322.32px;top:614.23px;font-size:15.2px;line-height:1;font-weight:700;color:#e4e4e4;letter-spacing:0.239px;white-space:pre;will-change:transform;">Nome:</div>
<div class="abs tx46" style="left:375.30px;top:614.23px;font-size:15.2px;line-height:1;font-weight:400;color:#d6d6d6;letter-spacing:-0.174px;white-space:pre;will-change:transform;">SANDRO REMONTTI</div>
<svg class="abs" style="left:305.6px;top:638px;" width="12" height="16" viewBox="0 0 12 16"><rect x="0.6" y="0.6" width="9.8" height="14" fill="none" stroke="#d6d6d6" stroke-width="1.1"/><path stroke="#d6d6d6" stroke-width="1.3" d="M2.5 2.8 H3.9 M4.8 2.8 H6.2 M7.1 2.8 H8.5 M2.5 5.3 H3.9 M4.8 5.3 H6.2 M7.1 5.3 H8.5 M2.5 7.8 H3.9 M4.8 7.8 H6.2 M7.1 7.8 H8.5"/><rect x="3.6" y="10.4" width="3.8" height="4.2" fill="#d6d6d6"/></svg>
<div class="abs tx47" style="left:322.32px;top:638.93px;font-size:15.2px;line-height:1;font-weight:700;color:#e4e4e4;letter-spacing:0.026px;white-space:pre;will-change:transform;">Empresa:</div>
<div class="abs tx48" style="left:396.13px;top:638.93px;font-size:15.2px;line-height:1;font-weight:400;color:#d6d6d6;letter-spacing:-0.174px;white-space:pre;will-change:transform;">SANDRO REMONTTI</div>
<svg class="abs" style="left:305.5px;top:662.6px;" width="12" height="16" viewBox="0 0 12 16"><path fill="#d6d6d6" d="M5.7 0.4 C8.8 0.4 11.2 2.8 11.2 5.8 C11.2 9 8.2 12 5.7 15.4 C3.2 12 0.2 9 0.2 5.8 C0.2 2.8 2.6 0.4 5.7 0.4 Z"/><circle cx="5.7" cy="5.6" r="2.2" fill="#3d3d3d"/></svg>
<div class="abs tx49" style="left:323.68px;top:663.13px;font-size:15.2px;line-height:1;font-weight:700;color:#e4e4e4;letter-spacing:0.129px;white-space:pre;will-change:transform;">Cidade/Estado:</div>
<div class="abs tx50" style="left:439.83px;top:663.13px;font-size:15.2px;line-height:1;font-weight:400;color:#d6d6d6;letter-spacing:-0.341px;white-space:pre;will-change:transform;">FREDERICO WESTPHALEN0</div>
<svg class="abs" style="left:305.5px;top:687.2px;" width="12" height="16" viewBox="0 0 12 16"><path fill="#d6d6d6" d="M5.7 0.4 C8.8 0.4 11.2 2.8 11.2 5.8 C11.2 9 8.2 12 5.7 15.4 C3.2 12 0.2 9 0.2 5.8 C0.2 2.8 2.6 0.4 5.7 0.4 Z"/><circle cx="5.7" cy="5.6" r="2.2" fill="#3d3d3d"/></svg>
<div class="abs tx51" style="left:322.32px;top:687.93px;font-size:15.2px;line-height:1;font-weight:700;color:#e4e4e4;letter-spacing:-0.052px;white-space:pre;will-change:transform;">Estado:</div>
<div class="abs tx52" style="left:382.82px;top:687.93px;font-size:15.2px;line-height:1;font-weight:400;color:#d6d6d6;letter-spacing:0.000px;white-space:pre;transform:scaleX(0.8764);transform-origin:0 0;will-change:transform;">RS</div>
<svg class="abs" style="left:1103px;top:613.5px;" width="13" height="16" viewBox="0 0 13 16"><path fill="none" stroke="#d6d6d6" stroke-width="1.2" stroke-linecap="round" stroke-linejoin="round" d="M8.2 0.8 V3.6 A0.8 0.8 0 0 0 9 4.4 H11.8 M10.4 15.3 H2.4 A1.4 1.4 0 0 1 1 13.9 V2.2 A1.4 1.4 0 0 1 2.4 0.8 H8.6 L11.8 4 V13.9 A1.4 1.4 0 0 1 10.4 15.3 Z M4 8.6 H8.8 M4 11.2 H7"/></svg>
<div class="abs tx53" style="left:1121.15px;top:614.23px;font-size:15.2px;line-height:1;font-weight:700;color:#e4e4e4;letter-spacing:-0.421px;white-space:pre;will-change:transform;">CNPJ:</div>
<div class="abs tx54" style="left:1170.68px;top:614.23px;font-size:15.2px;line-height:1;font-weight:400;color:#d6d6d6;letter-spacing:0.235px;white-space:pre;will-change:transform;">53.358.381/0001-41</div>
<svg class="abs" style="left:1101.5px;top:638.5px;" width="15" height="16" viewBox="0 0 15 16"><path fill="#d6d6d6" d="M3.4 0.6 C3.9 0.6 4.3 0.9 4.5 1.3 L5.8 4.3 C6 4.8 5.9 5.3 5.5 5.6 L4.3 6.6 C5.1 8.4 6.6 9.9 8.4 10.7 L9.4 9.5 C9.7 9.1 10.2 9 10.7 9.2 L13.7 10.5 C14.1 10.7 14.4 11.1 14.4 11.6 V13.6 C14.4 14.4 13.8 15 13 15 C6.4 14.6 1 9.4 0.6 2.4 C0.6 1.4 1.2 0.6 2 0.6 Z"/></svg>
<div class="abs tx55" style="left:1121.83px;top:638.93px;font-size:15.2px;line-height:1;font-weight:700;color:#e4e4e4;letter-spacing:0.210px;white-space:pre;will-change:transform;">Telefone:</div>
<div class="abs tx56" style="left:1195.51px;top:638.93px;font-size:15.2px;line-height:1;font-weight:400;color:#d6d6d6;letter-spacing:0.574px;white-space:pre;will-change:transform;">+55(55) 999 832 646</div>
<svg class="abs" style="left:1101.5px;top:662.8px;" width="16" height="16" viewBox="0 0 16 16"><circle cx="7.8" cy="7.8" r="7.4" fill="#d6d6d6"/><path fill="#3d3d3d" d="M3.2 7.7 L11.4 4.4 C11.8 4.3 12.1 4.5 12 5 L10.6 11.4 C10.5 11.8 10.2 11.9 9.9 11.7 L7.8 10.2 L6.8 11.2 C6.6 11.4 6.4 11.4 6.3 11.2 L6.5 9.1 L10.2 5.7 C10.4 5.5 10.1 5.4 9.9 5.6 L5.3 8.5 L3.4 7.9 C3 7.8 3 7.8 3.2 7.7 Z"/></svg>
<div class="abs tx57" style="left:1121.83px;top:663.13px;font-size:15.2px;line-height:1;font-weight:700;color:#e4e4e4;letter-spacing:0.115px;white-space:pre;will-change:transform;">Telegram:</div>
<div class="abs tx58" style="left:1198.15px;top:663.13px;font-size:15.2px;line-height:1;font-weight:400;color:#d6d6d6;letter-spacing:0.418px;white-space:pre;will-change:transform;">@sandroremontti</div>
<div class="abs tx59" style="left:1105.00px;top:688.87px;font-size:13.5px;line-height:1;font-weight:400;color:#d6d6d6;letter-spacing:0.000px;white-space:pre;will-change:transform;">#</div>
<div class="abs tx60" style="left:1121.51px;top:687.93px;font-size:15.2px;line-height:1;font-weight:700;color:#e4e4e4;letter-spacing:-0.192px;white-space:pre;will-change:transform;">ASN:</div>
<div class="abs tx61" style="left:1162.00px;top:687.93px;font-size:15.2px;line-height:1;font-weight:400;color:#d6d6d6;letter-spacing:0.303px;white-space:pre;will-change:transform;">12345</div>
<div class="card" style="left:284px;top:746px;width:1612px;height:179px"></div>
<svg class="abs" style="left:303px;top:770px;" width="20" height="18" viewBox="0 0 20 18"><circle cx="6.1" cy="7.1" r="3" fill="#dcdbea"/><circle cx="13.4" cy="6.6" r="3.5" fill="#dcdbea"/><path fill="#dcdbea" d="M8 17 C8.2 13.6 10.3 11.1 13.5 11.1 C16.7 11.1 18.9 13.6 19.1 17 Z"/><path fill="#dcdbea" d="M0.9 17 C1.1 13.8 3.3 11.6 6.2 11.6 C7.1 11.6 7.9 11.8 8.5 12.1 C7.3 13.3 6.7 15 6.6 17 Z"/></svg>
<div class="abs tx62" style="left:329.00px;top:770.56px;font-size:18.6px;line-height:1;font-weight:400;color:#dcdbea;letter-spacing:0.493px;white-space:pre;will-change:transform;">Informações do parceiro</div>
<svg class="abs" style="left:304px;top:809.6px;" width="16" height="12" viewBox="0 0 16 12"><circle cx="5.6" cy="3.6" r="2.9" fill="#d6d6d6"/><path fill="#d6d6d6" d="M0.4 11.4 C0.6 8.4 2.6 6.9 5.6 6.9 C8.6 6.9 10.6 8.4 10.8 11.4 Z"/><path stroke="#d6d6d6" stroke-width="1.1" d="M10.8 1.5 H15.2 M11 4.3 H15.2 M12.4 7.1 H15.2 M12.8 9.9 H15.2"/></svg>
<div class="abs tx63" style="left:322.32px;top:808.33px;font-size:15.2px;line-height:1;font-weight:700;color:#e4e4e4;letter-spacing:0.239px;white-space:pre;will-change:transform;">Nome:</div>
<div class="abs tx64" style="left:375.51px;top:808.33px;font-size:15.2px;line-height:1;font-weight:400;color:#d6d6d6;letter-spacing:-0.134px;white-space:pre;will-change:transform;">RUDIMAR REMONTTI</div>
<svg class="abs" style="left:305.6px;top:833px;" width="12" height="16" viewBox="0 0 12 16"><rect x="0.6" y="0.6" width="9.8" height="14" fill="none" stroke="#d6d6d6" stroke-width="1.1"/><path stroke="#d6d6d6" stroke-width="1.3" d="M2.5 2.8 H3.9 M4.8 2.8 H6.2 M7.1 2.8 H8.5 M2.5 5.3 H3.9 M4.8 5.3 H6.2 M7.1 5.3 H8.5 M2.5 7.8 H3.9 M4.8 7.8 H6.2 M7.1 7.8 H8.5"/><rect x="3.6" y="10.4" width="3.8" height="4.2" fill="#d6d6d6"/></svg>
<div class="abs tx65" style="left:322.32px;top:832.93px;font-size:15.2px;line-height:1;font-weight:700;color:#e4e4e4;letter-spacing:0.026px;white-space:pre;will-change:transform;">Empresa:</div>
<div class="abs tx66" style="left:396.17px;top:832.93px;font-size:15.2px;line-height:1;font-weight:400;color:#4682e2;letter-spacing:-0.172px;white-space:pre;will-change:transform;">REMONTTI LTDA</div>
<svg class="abs" style="left:305.5px;top:858px;" width="12" height="16" viewBox="0 0 12 16"><path fill="#d6d6d6" d="M5.7 0.4 C8.8 0.4 11.2 2.8 11.2 5.8 C11.2 9 8.2 12 5.7 15.4 C3.2 12 0.2 9 0.2 5.8 C0.2 2.8 2.6 0.4 5.7 0.4 Z"/><circle cx="5.7" cy="5.6" r="2.2" fill="#3d3d3d"/></svg>
<div class="abs tx67" style="left:323.68px;top:857.53px;font-size:15.2px;line-height:1;font-weight:700;color:#e4e4e4;letter-spacing:0.129px;white-space:pre;will-change:transform;">Cidade/Estado:</div>
<div class="abs tx68" style="left:439.83px;top:857.53px;font-size:15.2px;line-height:1;font-weight:400;color:#d6d6d6;letter-spacing:0.246px;white-space:pre;will-change:transform;">Frederico Westphalan / RS</div>
<svg class="abs" style="left:304.5px;top:881.5px;" width="14" height="16" viewBox="0 0 14 16"><path fill="none" stroke="#d6d6d6" stroke-width="1.2" stroke-linecap="round" stroke-linejoin="round" d="M2.2 1.8 A1 1 0 0 1 3.2 0.8 H12.2 A1 1 0 0 1 13.2 1.8 V14.2 A1 1 0 0 1 12.2 15.2 H3.2 A1 1 0 0 1 2.2 14.2 M2.2 3.8 V4.8 M2.2 7.2 V8.2 M2.2 10.6 V11.6 M0.8 5.2 H3.6 M0.8 8.6 H3.6 M0.8 12 H3.6 M6.2 0.8 V7.6 L8.2 6 L10.2 7.6 V0.8"/></svg>
<div class="abs tx69" style="left:322.15px;top:882.03px;font-size:15.2px;line-height:1;font-weight:700;color:#e4e4e4;letter-spacing:0.218px;white-space:pre;will-change:transform;">Documentação:</div>
<div class="abs tx70" style="left:443.34px;top:882.03px;font-size:15.2px;line-height:1;font-weight:400;color:#4682e2;letter-spacing:0.646px;white-space:pre;will-change:transform;">https://doc.rrflow.com.br</div>
<svg class="abs" style="left:903.5px;top:807.5px;" width="13" height="16" viewBox="0 0 13 16"><path fill="none" stroke="#d6d6d6" stroke-width="1.2" stroke-linecap="round" stroke-linejoin="round" d="M8.2 0.8 V3.6 A0.8 0.8 0 0 0 9 4.4 H11.8 M10.4 15.3 H2.4 A1.4 1.4 0 0 1 1 13.9 V2.2 A1.4 1.4 0 0 1 2.4 0.8 H8.6 L11.8 4 V13.9 A1.4 1.4 0 0 1 10.4 15.3 Z M4 8.6 H8.8 M4 11.2 H7"/></svg>
<div class="abs tx71" style="left:921.83px;top:808.33px;font-size:15.2px;line-height:1;font-weight:700;color:#e4e4e4;letter-spacing:-0.378px;white-space:pre;will-change:transform;">CNPJ:</div>
<div class="abs tx72" style="left:970.83px;top:808.33px;font-size:15.2px;line-height:1;font-weight:400;color:#d6d6d6;letter-spacing:0.685px;white-space:pre;will-change:transform;">44.993.620/0001-44</div>
<svg class="abs" style="left:902.5px;top:832.5px;" width="15" height="16" viewBox="0 0 15 16"><path fill="#d6d6d6" d="M3.4 0.6 C3.9 0.6 4.3 0.9 4.5 1.3 L5.8 4.3 C6 4.8 5.9 5.3 5.5 5.6 L4.3 6.6 C5.1 8.4 6.6 9.9 8.4 10.7 L9.4 9.5 C9.7 9.1 10.2 9 10.7 9.2 L13.7 10.5 C14.1 10.7 14.4 11.1 14.4 11.6 V13.6 C14.4 14.4 13.8 15 13 15 C6.4 14.6 1 9.4 0.6 2.4 C0.6 1.4 1.2 0.6 2 0.6 Z"/></svg>
<div class="abs tx73" style="left:922.34px;top:832.93px;font-size:15.2px;line-height:1;font-weight:700;color:#e4e4e4;letter-spacing:0.231px;white-space:pre;will-change:transform;">Telefone:</div>
<div class="abs tx74" style="left:995.66px;top:832.93px;font-size:15.2px;line-height:1;font-weight:400;color:#d6d6d6;letter-spacing:0.532px;white-space:pre;will-change:transform;">+55 (55) 999-382-319</div>
<svg class="abs" style="left:902.5px;top:857.3px;" width="16" height="16" viewBox="0 0 16 16"><circle cx="7.8" cy="7.8" r="7.4" fill="#d6d6d6"/><path fill="#3d3d3d" d="M3.2 7.7 L11.4 4.4 C11.8 4.3 12.1 4.5 12 5 L10.6 11.4 C10.5 11.8 10.2 11.9 9.9 11.7 L7.8 10.2 L6.8 11.2 C6.6 11.4 6.4 11.4 6.3 11.2 L6.5 9.1 L10.2 5.7 C10.4 5.5 10.1 5.4 9.9 5.6 L5.3 8.5 L3.4 7.9 C3 7.8 3 7.8 3.2 7.7 Z"/></svg>
<div class="abs tx75" style="left:922.34px;top:857.53px;font-size:15.2px;line-height:1;font-weight:700;color:#e4e4e4;letter-spacing:0.158px;white-space:pre;will-change:transform;">Telegram:</div>
<div class="abs tx76" style="left:999.00px;top:857.53px;font-size:15.2px;line-height:1;font-weight:400;color:#d6d6d6;letter-spacing:0.411px;white-space:pre;will-change:transform;">@remontti</div>
<svg class="abs" style="left:903px;top:881.5px;" width="15" height="16" viewBox="0 0 15 16"><path fill="none" stroke="#d6d6d6" stroke-width="1.5" stroke-linecap="round" stroke-linejoin="round" d="M1.6 9.5 V7.6 A6 6 0 0 1 13.6 7.6 V9.5"/><rect x="0.8" y="8.6" width="3" height="5.6" rx="1.2" fill="#d6d6d6"/><rect x="11.4" y="8.6" width="3" height="5.6" rx="1.2" fill="#d6d6d6"/><path fill="none" stroke="#d6d6d6" stroke-width="1.2" stroke-linecap="round" stroke-linejoin="round" d="M12.6 14 Q12.4 15.2 10.6 15.2"/></svg>
<div class="abs tx77" style="left:921.83px;top:882.03px;font-size:15.2px;line-height:1;font-weight:700;color:#e4e4e4;letter-spacing:0.086px;white-space:pre;will-change:transform;">Suporte:</div>
<div class="abs tx78" style="left:989.00px;top:882.03px;font-size:15.2px;line-height:1;font-weight:400;color:#4682e2;letter-spacing:0.574px;white-space:pre;will-change:transform;">https://portal.rrflow.com.br/cliente/</div>
<svg class="abs" style="left:0;top:0" width="1920" height="1018" viewBox="0 0 1920 1018">
<path fill="#2aa38a" d="M1647.7 850 L1652 855.2 L1645.8 865.8 L1652 876.2 L1647.7 881.6 L1637.4 865.8 Z"/>
<path fill="#2aa38a" d="M1831 850 L1826.8 855.2 L1833.4 865.8 L1826.8 876.2 L1831 881.6 L1841.4 865.8 Z"/>
<path fill="#e6e6e6" d="M1655.2 877.6 V853.6 H1662 V858.2 C1664 854.8 1667.5 853.2 1672.8 853.2 V860.2 C1665.5 860.2 1662 862.8 1662 869 V877.6 Z"/>
<g fill="none" stroke="#e6e6e6" stroke-width="6.8">
<path d="M1677 865.2 H1692.4 C1692.4 859.6 1688.6 856.3 1684.4 856.3 C1679.4 856.3 1676.4 860.2 1676.4 865.5 C1676.4 871 1680 874.6 1684.6 874.6 C1687.6 874.6 1690 873.4 1691.6 871.2"/>
<path d="M1702 877.6 V853.6 M1702 864 C1702 858.6 1704.4 856.4 1708.4 856.4 C1712.4 856.4 1715.6 858.4 1715.6 864 V877.6 M1715.6 864 C1715.6 858.6 1718.6 856.4 1722.6 856.4 C1726.6 856.4 1729.6 858.6 1729.6 864 V877.6"/>
<circle cx="1748.4" cy="865.6" r="8.6"/>
<path d="M1766.2 877.6 V853.6 M1766.2 864 C1766.2 858.6 1769 856.4 1773 856.4 C1777.4 856.4 1780.6 858.6 1780.6 864.6 V877.6"/>
<path d="M1792.8 847 V877.6 M1806.9 847 V877.6 M1819.7 855 V877.6"/>
<path d="M1785 858.6 H1814" stroke-width="7"/>
</g>
<path fill="#e6e6e6" d="M1796.8 840.4 C1803 833 1810 829.4 1822 828 C1838 826.4 1852 823.6 1864.6 821.4 C1869 820.6 1872.5 822 1874.6 824.6 C1866 826.6 1858 829 1853 834 C1849 838 1846 846 1844.4 862.6 C1842 854 1836 843 1826 838.4 C1816 834.2 1806 836.2 1796.8 840.4 Z"/>
<path fill="#f2a03a" d="M1840.8 840.4 C1846 833.6 1855 828 1867.2 824.8 C1859 830.6 1851 836 1843.2 841.8 Z"/>
<path fill="#f2a03a" d="M1816.6 847.6 C1819 846 1822 845.4 1826 844.6 C1824 847.4 1821.8 849 1818.6 848.8 Z M1819.4 846 L1820.4 843.6"/>
</svg>
<div class="abs tx79" style="left:284.83px;top:983.23px;font-size:15.2px;line-height:1;font-weight:400;color:#d6d6dc;letter-spacing:0.552px;white-space:pre;will-change:transform;">© Copyright 2026 by</div>
<div class="abs tx80" style="left:438.66px;top:983.23px;font-size:15.2px;line-height:1;font-weight:400;color:#4682e2;letter-spacing:-0.319px;white-space:pre;will-change:transform;">RR Flow</div>
<div class="abs" style="left:502.3px;top:981px;width:1px;height:17.5px;background:#cfcfd4"></div>
<div class="abs tx81" style="left:509.32px;top:983.23px;font-size:15.2px;line-height:1;font-weight:400;color:#d6d6dc;letter-spacing:0.392px;white-space:pre;will-change:transform;">Desenvolvido e Mantido por</div>
<div class="abs tx82" style="left:711.66px;top:983.23px;font-size:15.2px;line-height:1;font-weight:400;color:#4682e2;letter-spacing:0.445px;white-space:pre;will-change:transform;">Remontti</div>
<div class="abs tx83" style="left:1762.49px;top:983.03px;font-size:15.2px;line-height:1;font-weight:400;color:#4682e2;letter-spacing:0.280px;white-space:pre;will-change:transform;">Portal do Cliente</div>
<div class="abs" style="left:1870px;top:225px;width:50px;height:25px;overflow:hidden"><div class="abs" style="left:12px;top:-20px;width:40px;height:38px;border-radius:19px 0 0 19px;background:#4479da;box-shadow:0 0 6px rgba(68,121,218,.5)"></div><svg class="abs" style="left:21.5px;top:-9.5px" width="18" height="18" viewBox="2.3 2.3 19.4 19.4"><path fill="none" stroke="#fff" stroke-width="2.1" stroke-linecap="round" stroke-linejoin="round" d="M10.325 4.317c.426 -1.756 2.924 -1.756 3.35 0a1.724 1.724 0 0 0 2.573 1.066c1.543 -.94 3.31 .826 2.37 2.37a1.724 1.724 0 0 0 1.065 2.572c1.756 .426 1.756 2.924 0 3.35a1.724 1.724 0 0 0 -1.066 2.573c.94 1.543 -.826 3.31 -2.37 2.37a1.724 1.724 0 0 0 -2.572 1.065c-.426 1.756 -2.924 1.756 -3.35 0a1.724 1.724 0 0 0 -2.573 -1.066c-1.543 .94 -3.31 -.826 -2.37 -2.37a1.724 1.724 0 0 0 -1.065 -2.572c-1.756 -.426 -1.756 -2.924 0 -3.35a1.724 1.724 0 0 0 1.066 -2.573c-.94 -1.543 .826 -3.31 2.37 -2.37c1 .608 2.296 .07 2.572 -1.065zM9 12a3 3 0 1 0 6 0a3 3 0 0 0 -6 0"/></svg></div>
<div class="abs" style="left:1882px;top:180px;width:40px;height:38px;border-radius:19px 0 0 19px;background:#4479da;box-shadow:0 0 6px rgba(68,121,218,.5)"></div>
<svg class="abs" style="left:1892px;top:190px" width="18" height="18" viewBox="2.3 2.3 19.4 19.4"><path fill="none" stroke="#fff" stroke-width="2.1" stroke-linecap="round" stroke-linejoin="round" d="M10.325 4.317c.426 -1.756 2.924 -1.756 3.35 0a1.724 1.724 0 0 0 2.573 1.066c1.543 -.94 3.31 .826 2.37 2.37a1.724 1.724 0 0 0 1.065 2.572c1.756 .426 1.756 2.924 0 3.35a1.724 1.724 0 0 0 -1.066 2.573c.94 1.543 -.826 3.31 -2.37 2.37a1.724 1.724 0 0 0 -2.572 1.065c-.426 1.756 -2.924 1.756 -3.35 0a1.724 1.724 0 0 0 -2.573 -1.066c-1.543 .94 -3.31 -.826 -2.37 -2.37a1.724 1.724 0 0 0 -1.065 -2.572c-1.756 -.426 -1.756 -2.924 0 -3.35a1.724 1.724 0 0 0 1.066 -2.573c-.94 -1.543 .826 -3.31 2.37 -2.37c1 .608 2.296 .07 2.572 -1.065zM9 12a3 3 0 1 0 6 0a3 3 0 0 0 -6 0"/></svg>
</body>
</html>
